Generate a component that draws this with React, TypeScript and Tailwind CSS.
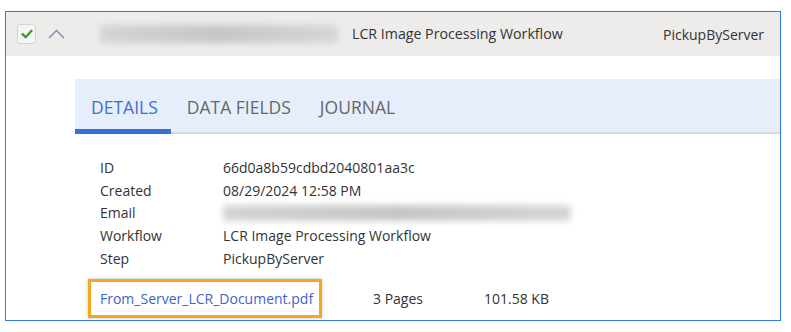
import React from "react";

const font = { fontFamily: '"Open Sans", "Noto Sans", sans-serif' };

const Blur = ({ className }: { className: string }) => (
  <div className={`rounded-sm bg-gradient-to-r from-[#d4d4d4] via-[#c6c6c6] to-[#d6d6d6] blur-[3px] ${className}`} />
);

const details = [
  { label: "ID", value: "66d0a8b59cdbd2040801aa3c" },
  { label: "Created", value: "08/29/2024 12:58 PM" },
  { label: "Email", value: null },
  { label: "Workflow", value: "LCR Image Processing Workflow" },
  { label: "Step", value: "PickupByServer" },
];

const tabs = ["DETAILS", "DATA FIELDS", "JOURNAL"];

const App = () => {
  return (
    <div className="w-[791px] h-[332px] bg-white pt-[11px] pl-[5px]" style={font}>
      <div className="w-[776px] h-[310px] border border-[#2f7ae5] flex flex-col text-[14px] text-[#333] overflow-hidden">
        {/* row header */}
        <div className="h-[44px] bg-[#edecea] flex items-center shrink-0">
          <div className="ml-[11px] w-[19px] h-[20px] rounded-[3px] border border-[#d2d2d2] bg-[#f5f5f5] flex items-center justify-center">
            <svg width="12" height="10" viewBox="0 0 12 10">
              <path d="M1.5 5.2 L4.6 8.2 L10.5 1.8" fill="none" stroke="#3f9a2c" strokeWidth="2.4" strokeLinecap="round" strokeLinejoin="round" />
            </svg>
          </div>
          <svg className="ml-[12px]" width="17" height="10" viewBox="0 0 17 10">
            <path d="M1 9 L8.5 1.5 L16 9" fill="none" stroke="#7d8aa3" strokeWidth="1.4" />
          </svg>
          <Blur className="ml-[35px] w-[238px] h-[18px]" />
          <span className="ml-[14px] w-[311px] text-[14.2px]">LCR Image Processing Workflow</span>
          <span>PickupByServer</span>
        </div>

        {/* tabs + details */}
        <div className="ml-[69px] mt-[23px] flex flex-col">
          <div className="h-[55px] bg-[#e6eefb] border-b-2 border-[#d9d9d9] flex items-end">
            {tabs.map((t, i) => (
              <div
                key={t}
                className={`h-[53px] flex items-center pl-[16px] pr-[13px] text-[17.5px] -mb-[2px] ${
                  i === 0 ? "text-[#3d6fd6] border-b-[5px] border-[#3a6fd6] pt-[5px]" : "text-[#666]"
                }`}
              >
                {t}
              </div>
            ))}
          </div>

          <div className="pl-[25px] pt-[22px] flex flex-col">
            {details.map((d) => (
              <div key={d.label} className="h-[22.75px] flex items-center">
                <span className="w-[123px]">{d.label}</span>
                {d.value ? <span>{d.value}</span> : <Blur className="w-[348px] h-[16px]" />}
              </div>
            ))}
          </div>

          <div className="mt-[9px] ml-[13px] flex items-center">
            <div className="w-[234px] h-[39px] border-[3px] border-[#f5a81f] shadow-[0_0_3px_rgba(0,0,0,0.25)] flex items-center pl-[9px]">
              <span className="text-[#3e63c8]">From_Server_LCR_Document.pdf</span>
            </div>
            <span className="ml-[51px] w-[111px]">3 Pages</span>
            <span>101.58 KB</span>
          </div>
        </div>
      </div>
    </div>
  );
};

export default App;
